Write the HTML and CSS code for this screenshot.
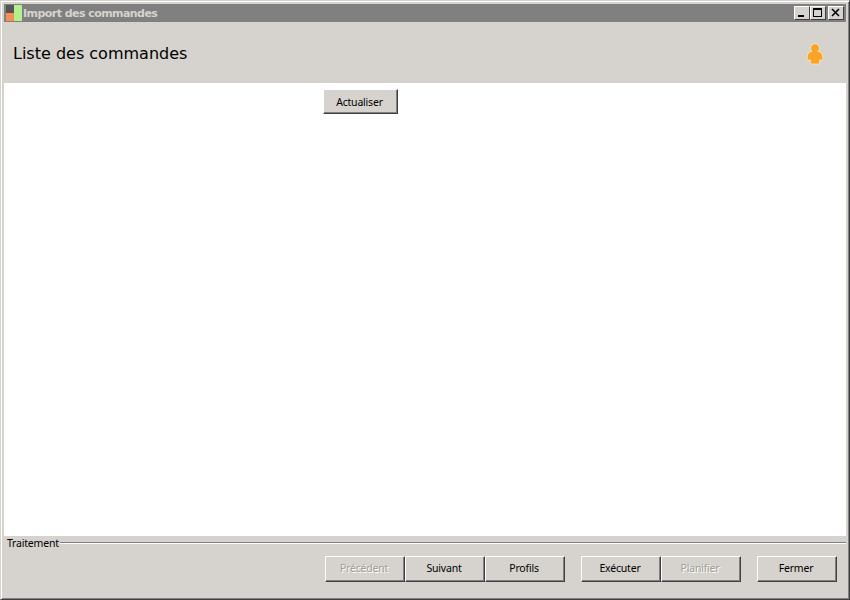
FILE: index.html
```html
<!DOCTYPE html>
<html lang="fr">
<head>
<meta charset="utf-8">
<title>Import des commandes</title>
<link rel="stylesheet" href="styles.css">
</head>
<body>
<div class="window">
  <div class="titlebar">
    <svg class="app-icon" width="18" height="18" viewBox="0 0 18 18">
      <rect x="1" y="1" width="8" height="8" fill="#555555"/>
      <rect x="1" y="9" width="8" height="8" fill="#f58f55"/>
      <rect x="9" y="1" width="8" height="16" fill="#b4f08c"/>
    </svg>
    <span class="title-text">Import des commandes</span>
    <div class="caption-buttons">
      <div class="cap-btn"><svg width="12" height="10" viewBox="0 0 12 10"><rect x="2" y="7" width="6" height="2" fill="#000"/></svg></div>
      <div class="cap-btn"><svg width="12" height="10" viewBox="0 0 12 10"><path d="M1 0h9v9h-9z M2 2v6h7v-6z" fill="#000" fill-rule="evenodd"/></svg></div>
      <div class="cap-btn cap-close"><svg width="12" height="10" viewBox="0 0 12 10"><path d="M2 1l7 7M9 1l-7 7" stroke="#000" stroke-width="1.6" fill="none"/></svg></div>
    </div>
  </div>
  <div class="header">
    <h1 class="heading">Liste des commandes</h1>
    <svg class="user-icon" width="18" height="22" viewBox="0 0 18 22">
      <circle cx="9" cy="5" r="4.300" fill="#f9a428" stroke="#fff0d0" stroke-width=".7"/>
      <path d="M5.500 8.500H12.500C14.500 8.500 16 10 16.500 12.500L17 15.500C17.100 16.500 16.600 17 15.800 17H13.800L13.500 20C13.400 20.700 13 21 12.400 21H5.600C5 21 4.600 20.700 4.500 20L4.200 17H2.200C1.400 17 .9 16.500 1 15.500L1.500 12.500C2 10 3.500 8.500 5.500 8.500Z" fill="#f9a428" stroke="#fff0d0" stroke-width=".7"/>
      <circle cx="9" cy="6" r="3.500" fill="#f9a428"/>
    </svg>
  </div>
  <div class="content">
    <div class="content-row">
      <button class="btn btn-refresh" type="button">Actualiser</button>
    </div>
  </div>
  <div class="process">
    <div class="legend-row">
      <span class="legend">Traitement</span>
      <span class="legend-line"></span>
    </div>
    <div class="actions">
      <div class="group">
        <button class="btn btn-action is-disabled" type="button">Précédent</button>
        <button class="btn btn-action" type="button">Suivant</button>
        <button class="btn btn-action" type="button">Profils</button>
      </div>
      <div class="group">
        <button class="btn btn-action" type="button">Exécuter</button>
        <button class="btn btn-action is-disabled" type="button">Planifier</button>
      </div>
      <div class="group">
        <button class="btn btn-action" type="button">Fermer</button>
      </div>
    </div>
  </div>
</div>
</body>
</html>
```
FILE: styles.css
```css
* { box-sizing: border-box; }
html, body { margin: 0; padding: 0; }
body {
  width: 850px;
  height: 600px;
  overflow: hidden;
  font-family: "Noto Sans", "Open Sans", sans-serif;
  color: #000;
  background: #d6d3ce;
}
.window {
  width: 850px;
  height: 600px;
  display: flex;
  flex-direction: column;
  background: #d6d3ce;
  border-style: solid;
  border-width: 1px;
  border-color: #d6d3ce #404040 #404040 #d6d3ce;
  box-shadow: inset 1px 1px 0 #fff, inset -1px -1px 0 #808080;
  padding: 3px;
}
.titlebar {
  height: 18px;
  flex: none;
  display: flex;
  align-items: center;
  background: #808080;
  padding-left: 1px;
  padding-right: 2px;
}
.app-icon { flex: none; }
.title-text {
  font-family: "DejaVu Sans", sans-serif;
  font-weight: bold;
  font-size: 11px;
  letter-spacing: -0.55px;
  color: #d6d3ce;
}
.caption-buttons { margin-left: auto; display: flex; }
.cap-btn {
  width: 16px;
  height: 14px;
  display: flex;
  align-items: center;
  justify-content: center;
  background: #d6d3ce;
  border-style: solid;
  border-width: 1px;
  border-color: #fff #404040 #404040 #fff;
}
.cap-close { margin-left: 2px; }
.header {
  height: 61px;
  flex: none;
  display: flex;
  align-items: center;
  justify-content: space-between;
  padding: 2px 22px 0 9px;
}
.heading {
  margin: 0;
  font-family: "DejaVu Sans", sans-serif;
  font-weight: normal;
  font-size: 16px;
}
.user-icon { flex: none; }
.content {
  height: 453px;
  flex: none;
  background: #fff;
  padding-top: 6px;
  padding-left: 319px;
}
.content-row { display: flex; }
.btn {
  font-family: "Noto Sans", "Open Sans", sans-serif;
  font-size: 10.5px;
  letter-spacing: -0.2px;
  color: #000;
  background: #d6d3ce;
  border-style: solid;
  border-width: 1px;
  border-color: #fff #404040 #404040 #fff;
  box-shadow: inset -1px -1px 0 #808080;
  border-radius: 0;
  padding: 0 2px 2px 0;
  margin: 0;
}
.btn-refresh { width: 75px; height: 25px; padding-bottom: 0; }
.btn-action { width: 80px; height: 26px; }
.is-disabled { color: #a19e96; text-shadow: 1px 1px 0 #fff; }
.process { flex: 1; display: flex; flex-direction: column; }
.legend-row {
  display: flex;
  align-items: center;
  height: 14px;
  padding-left: 3px;
}
.legend { font-size: 10.5px; letter-spacing: -0.2px; line-height: 14px; }
.legend-line {
  flex: 1;
  height: 2px;
  margin-left: 1px;
  border-top: 1px solid #808080;
  border-bottom: 1px solid #fff;
}
.actions {
  display: flex;
  justify-content: flex-end;
  gap: 16px;
  padding: 6px 9px 0 0;
}
.group { display: flex; }
```
